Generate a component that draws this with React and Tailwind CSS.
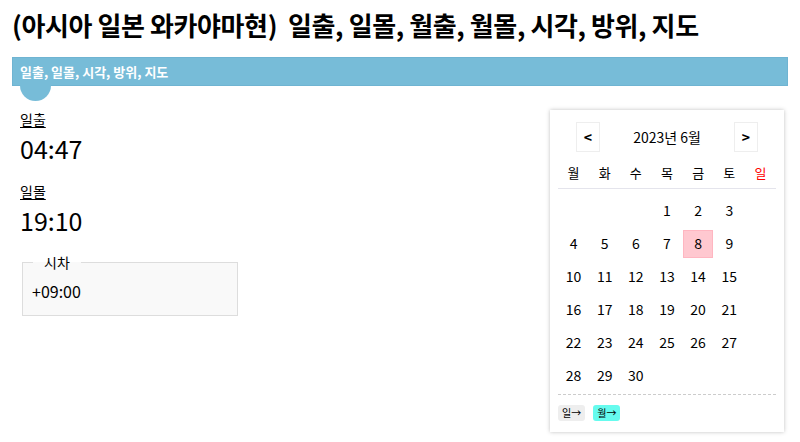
import React from 'react';

const weekdays = ['월', '화', '수', '목', '금', '토', '일'];

// June 2023 starts on Thursday (Monday-first grid)
const weeks = [
  [null, null, null, 1, 2, 3, null],
  [4, 5, 6, 7, 8, 9, null],
  [10, 11, 12, 13, 14, 15, null],
  [16, 17, 18, 19, 20, 21, null],
  [22, 23, 24, 25, 26, 27, null],
  [28, 29, 30, null, null, null, null],
];

const TODAY = 8;

const Calendar = () => (
  <div className="w-[234px] bg-white shadow-[0_0_4px_rgba(0,0,0,0.25)] px-2 pt-3 pb-[11px]">
    <div className="flex items-center justify-between px-[18px]">
      <button className="w-[24px] h-[30px] border border-[#eee] flex items-center justify-center text-[14px] font-bold text-black">
        &lt;
      </button>
      <span className="text-[14px] text-black">2023년 6월</span>
      <button className="w-[24px] h-[30px] border border-[#eee] flex items-center justify-center text-[14px] font-bold text-black">
        &gt;
      </button>
    </div>

    <div className="grid grid-cols-7 mt-[8px] pb-[2px] border-b border-[#e4e4ec]">
      {weekdays.map((d) => (
        <div key={d} className={`h-[26px] flex items-center justify-center text-[13px] ${d === '일' ? 'text-[#ff0000]' : 'text-black'}`}>
          {d}
        </div>
      ))}
    </div>

    <div className="pt-[5px]">
      {weeks.map((week, i) => (
        <div key={i} className="grid grid-cols-7 h-[33px]">
          {week.map((day, j) => (
            <div key={j} className="flex items-center justify-center">
              {day && (
                <span
                  className={`w-[30px] h-[28px] flex items-center justify-center text-[14px] text-black ${
                    day === TODAY ? 'bg-[#ffc8d0] border border-[#ffb6c1]' : ''
                  }`}
                >
                  {day}
                </span>
              )}
            </div>
          ))}
        </div>
      ))}
    </div>

    <div className="border-t border-dashed border-[#ccc] mt-[2px] pt-[10px] flex gap-[8px]">
      <button className="h-[16px] px-[4px] rounded-[3px] bg-[#eeeeee] text-[10px] leading-none text-black">일→</button>
      <button className="h-[16px] px-[4px] rounded-[3px] bg-[#66fbee] text-[10px] leading-none text-black">월→</button>
    </div>
  </div>
);

export default function App() {
  return (
    <div className="w-[800px] h-[442px] bg-white text-black font-['Noto_Sans_CJK_KR','Noto_Sans',sans-serif] overflow-hidden">
      <h1 className="px-[12px] pt-[6px] text-[26px] leading-[38px] font-bold tracking-[-0.4px] whitespace-nowrap">
        (아시아 일본 와카야마현)&nbsp; 일출, 일몰, 월출, 월몰, 시각, 방위, 지도
      </h1>

      <div className="mx-[12px] mt-[13px] relative">
        <div className="h-[29px] bg-[#77bcd8] border border-[#6fb4d2]"></div>
        <div className="absolute left-[8px] top-[13px] w-[31px] h-[31px] rounded-full bg-[#77bcd8]"></div>
        <div className="absolute left-[1px] right-[1px] top-[1px] h-[27px] bg-[#77bcd8] flex items-center px-[7px]">
          <span className="text-white text-[13px] font-bold">일출, 일몰, 시각, 방위, 지도</span>
        </div>
      </div>

      <div className="flex justify-between pl-[20px] pr-[16px]">
        <div className="pt-[24px]">
          <div className="text-[14px] leading-[18px] underline underline-offset-2">일출</div>
          <div className="text-[25px] leading-[36px] mt-[2px]">04:47</div>
          <div className="text-[14px] leading-[18px] underline underline-offset-2 mt-[16px]">일몰</div>
          <div className="text-[25px] leading-[36px] mt-[2px]">19:10</div>

          <fieldset className="mt-[16px] ml-[2px] w-[216px] h-[62px] border border-[#ddd] bg-[#f9f9f9] px-[9px]">
            <legend className="px-[11px] ml-[1px] text-[14px] leading-[16px]">시차</legend>
            <div className="text-[16px] leading-[20px] mt-[11px]">+09:00</div>
          </fieldset>
        </div>

        <div className="pt-[24px]">
          <Calendar />
        </div>
      </div>
    </div>
  );
}
